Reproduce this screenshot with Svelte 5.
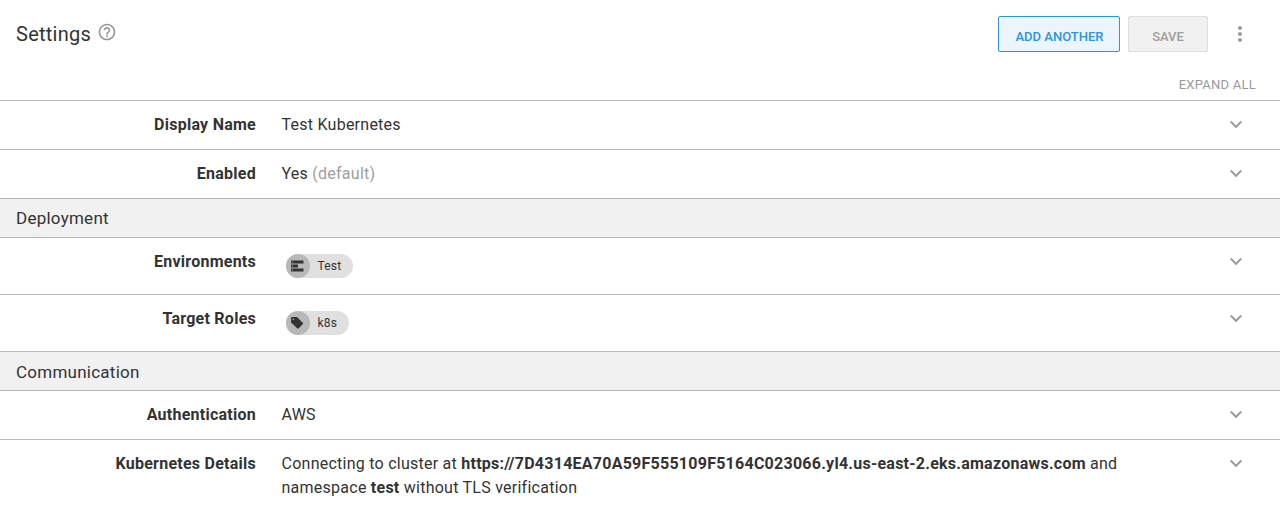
<script>
  const groups = [
    { title: null, rows: [{ label: 'Display Name', value: 'Test Kubernetes' }, { label: 'Enabled', value: 'Yes', note: '(default)' }] },
    { title: 'Deployment', rows: [{ label: 'Environments', chip: 'Test', icon: 'env' }, { label: 'Target Roles', chip: 'k8s', icon: 'tag' }] },
    { title: 'Communication', low: true, rows: [{ label: 'Authentication', value: 'AWS' }, { label: 'Kubernetes Details', cluster: true }] }
  ];
</script>

<main>
  <header>
    <h1>Settings</h1>
    <svg class="help" viewBox="0 0 24 24"><path d="M11 18h2v-2h-2v2zm1-16C6.480 2 2 6.480 2 12s4.480 10 10 10 10-4.480 10-10S17.520 2 12 2zm0 18c-4.410 0-8-3.590-8-8s3.590-8 8-8 8 3.590 8 8-3.590 8-8 8zm0-14c-2.210 0-4 1.790-4 4h2c0-1.100.9-2 2-2s2 .9 2 2c0 2-3 1.750-3 5h2c0-2.250 3-2.500 3-5 0-2.210-1.790-4-4-4z" /></svg>
    <div class="actions">
      <button class="add">ADD ANOTHER</button>
      <button class="save">SAVE</button>
      <svg class="more" viewBox="0 0 24 24"><path d="M12 8c1.100 0 2-.9 2-2s-.9-2-2-2-2 .9-2 2 .9 2 2 2zm0 2c-1.100 0-2 .9-2 2s.9 2 2 2 2-.9 2-2-.9-2-2-2zm0 6c-1.100 0-2 .9-2 2s.9 2 2 2 2-.9 2-2-.9-2-2-2z" /></svg>
    </div>
  </header>
  <div class="expand">EXPAND ALL</div>

  {#each groups as group}
    {#if group.title}<h2 class:low={group.low}>{group.title}</h2>{/if}
    {#each group.rows as row}
      <div class="row" class:tall={row.chip}>
        <div class="label">{row.label}</div>
        <div class="value">
          {#if row.chip}
            <span class="chip">
              <span class="disc">
                {#if row.icon === 'env'}
                  <svg viewBox="0 0 13 12"><path fill-rule="evenodd" d="M0 .6h12.500v2.800H0zM1 1.500v1h1v-1zM0 4.600h7v2.800H0zM1 5.500v1h1v-1zM0 8.600h12.500v2.800H0zM1 9.500v1h1v-1z" /></svg>
                {:else}
                  <svg viewBox="0 0 13 12"><path fill-rule="evenodd" d="M0 1.200Q0 0 1.200 0H5.300Q6 0 6.500.5L11.700 5.700Q12.500 6.500 11.700 7.300L7.800 11.200Q7 12 6.200 11.200L.6 6.100Q0 5.500 0 4.800ZM2.200 1.400a.8.8 0 1 0 0 1.600.8.8 0 1 0 0-1.600" /></svg>
                {/if}
              </span>
              <span class="chip-text">{row.chip}</span>
            </span>
          {:else if row.cluster}
            Connecting to cluster at <b>https://7D4314EA70A59F555109F5164C023066.yl4.us-east-2.eks.amazonaws.com</b> and namespace <b>test</b> without TLS verification
          {:else}
            {row.value}{#if row.note}&nbsp;<span class="note">{row.note}</span>{/if}
          {/if}
        </div>
        <svg class="chevron" viewBox="0 0 24 24"><path d="M7.410 7.840L12 12.420l4.590-4.580L18 9.250l-6 6-6-6z" /></svg>
      </div>
    {/each}
  {/each}
</main>

<style>
  :global(body) { background: #fff; overflow: hidden; }
  main { font: 16px/24px Roboto, sans-serif; letter-spacing: 0.25px; color: #333; }
  header { display: flex; align-items: center; height: 68px; padding: 0 28px 0 16px; box-sizing: border-box; }
  h1 { margin: 0; font-size: 20px; font-weight: 400; line-height: 28px; }
  svg { display: block; fill: #999; flex: none; }
  .help { width: 20px; height: 20px; margin: -4px 0 0 6.200px; }
  .actions { display: flex; align-items: center; gap: 8px; margin-left: auto; }
  button { height: 36px; box-sizing: border-box; padding: 5px 0 0; border: 1px solid; border-radius: 2px; font: 500 13px/18px Roboto, sans-serif; }
  .add { width: 122px; padding-left: 1px; color: #2f93e0; background: #ecf4fc; border-color: #2f93e0; }
  .save { width: 80px; color: #9e9e9e; background: #f1f1f1; border-color: #dedede; }
  .more { width: 24px; height: 24px; margin-left: 12px; }
  .expand { height: 32px; line-height: 33px; padding-right: 24px; text-align: right; font-size: 13px; color: #999; }
  h2 { margin: 0; height: 38px; border-top: 1px solid #b8b8b8; background: #f1f1f1; padding-left: 16px; font-size: 17px; font-weight: 400; line-height: 39px; }
  .low { line-height: 41px; }
  .row { display: flex; min-height: 49px; border-top: 1px solid #b8b8b8; padding: 12px 32px 0 0; box-sizing: border-box; }
  .tall { min-height: 57px; }
  .label { width: 256px; flex: none; text-align: right; font-weight: 700; }
  .value { width: 850px; margin-left: 25.500px; }
  .note { color: #9e9e9e; }
  .chevron { width: 24px; height: 24px; margin-left: auto; }
  .chip { display: flex; width: fit-content; height: 24px; margin: 4px 0 0 4.500px; padding-right: 12px; border-radius: 12px; background: #e0e0e0; }
  .disc { display: flex; align-items: center; justify-content: center; width: 24px; height: 24px; border-radius: 50%; background: #b8b8b8; }
  .disc svg { width: 13px; height: 12px; margin-right: 1px; fill: #333; }
  .chip-text { margin-left: 7.400px; font-size: 12px; line-height: 24px; }
</style>
